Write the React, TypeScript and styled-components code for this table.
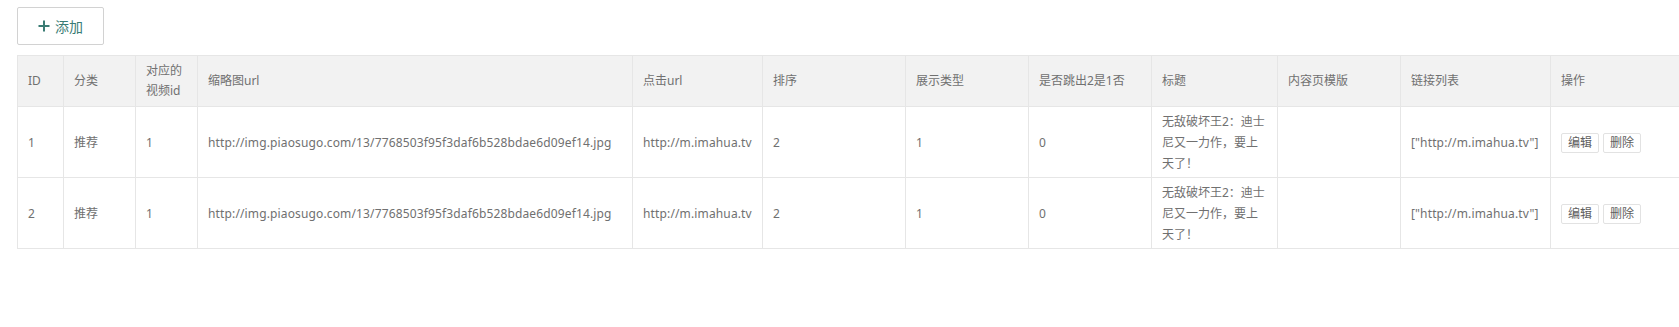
import React from "react";
import styled, { createGlobalStyle } from "styled-components";

const GlobalStyle = createGlobalStyle`
  html, body {
    margin: 0;
    padding: 0;
    background: #fff;
    overflow: hidden;
  }
  body {
    font-family: "Noto Sans", "Noto Sans CJK SC", sans-serif;
    color: #666;
  }
`;

const Page = styled.div`
  padding: 7px 0 0 17px;
  overflow: hidden;
`;

const Toolbar = styled.div`
  display: flex;
  margin-bottom: 10px;
`;

const AddButton = styled.button`
  display: flex;
  align-items: center;
  justify-content: center;
  gap: 5px;
  width: 87px;
  height: 38px;
  padding: 0;
  border: 1px solid #d2d2d2;
  border-radius: 2px;
  background: #fff;
  color: #3a7c74;
  font-family: inherit;
  font-size: 14px;
  cursor: pointer;
`;

const Table = styled.table`
  border-collapse: collapse;
  table-layout: fixed;
  width: 1683px;
  font-size: 12px;
`;

const Th = styled.th`
  background: #f2f2f2;
  border: 1px solid #e6e6e6;
  padding: 5px 10px;
  line-height: 20px;
  height: 40px;
  text-align: left;
  font-weight: normal;
  color: #707070;
  vertical-align: middle;
`;

const Td = styled.td<{ $latin?: boolean }>`
  border: 1px solid #e6e6e6;
  padding: 4px 10px 3px;
  line-height: 21px;
  height: 63px;
  color: #707070;
  vertical-align: middle;
  word-break: break-all;
  letter-spacing: ${(p) => (p.$latin ? "0.14px" : "normal")};
`;

const SmallButton = styled.button`
  height: 20px;
  width: 38px;
  padding: 0;
  margin-right: 4px;
  border: 1px solid #e2e2e2;
  border-radius: 2px;
  background: #fff;
  color: #606060;
  font-family: inherit;
  font-size: 12px;
  line-height: 18px;
`;

const PlusIcon = () => (
  <svg width="12" height="12" viewBox="0 0 12 12">
    <path d="M6 0.5v11M0.5 6h11" stroke="currentColor" strokeWidth="2" />
  </svg>
);

const columns = [
  { title: "ID", width: 46 },
  { title: "分类", width: 72 },
  { title: "对应的视频id", width: 62 },
  { title: "缩略图url", width: 435 },
  { title: "点击url", width: 130 },
  { title: "排序", width: 143 },
  { title: "展示类型", width: 123 },
  { title: "是否跳出2是1否", width: 123 },
  { title: "标题", width: 126 },
  { title: "内容页模版", width: 123 },
  { title: "链接列表", width: 150 },
  { title: "操作", width: 150 },
];

const rows = [1, 2].map((id) => ({
  id,
  category: "推荐",
  videoId: 1,
  thumb: "http://img.piaosugo.com/13/7768503f95f3daf6b528bdae6d09ef14.jpg",
  url: "http://m.imahua.tv",
  sort: 2,
  type: 1,
  jump: 0,
  title: "无敌破坏王2：迪士尼又一力作，要上天了！",
  template: "",
  links: '["http://m.imahua.tv"]',
}));

export default function App() {
  return (
    <Page>
      <GlobalStyle />
      <Toolbar>
        <AddButton>
          <PlusIcon />
          添加
        </AddButton>
      </Toolbar>
      <Table>
        <colgroup>
          {columns.map((c) => (
            <col key={c.title} style={{ width: c.width }} />
          ))}
        </colgroup>
        <thead>
          <tr>
            {columns.map((c) => (
              <Th key={c.title}>{c.title}</Th>
            ))}
          </tr>
        </thead>
        <tbody>
          {rows.map((r) => (
            <tr key={r.id}>
              <Td>{r.id}</Td>
              <Td>{r.category}</Td>
              <Td>{r.videoId}</Td>
              <Td $latin>{r.thumb}</Td>
              <Td $latin>{r.url}</Td>
              <Td>{r.sort}</Td>
              <Td>{r.type}</Td>
              <Td>{r.jump}</Td>
              <Td>{r.title}</Td>
              <Td>{r.template}</Td>
              <Td $latin>{r.links}</Td>
              <Td>
                <SmallButton>编辑</SmallButton>
                <SmallButton>删除</SmallButton>
              </Td>
            </tr>
          ))}
        </tbody>
      </Table>
    </Page>
  );
}
